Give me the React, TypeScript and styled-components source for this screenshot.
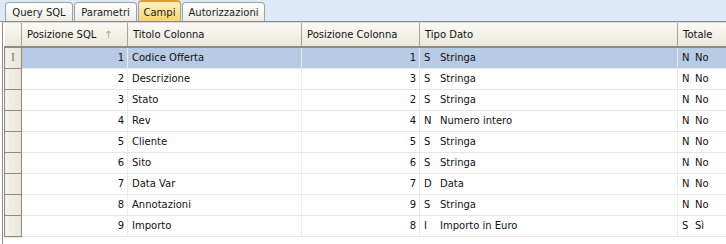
import styled, { createGlobalStyle, css } from "styled-components";

const GlobalStyle = createGlobalStyle`
  html, body {
    margin: 0;
    padding: 0;
    background: #ffffff;
  }
  body {
    font-family: "DejaVu Sans", Verdana, sans-serif;
    font-size: 10px;
  }
`;

const Frame = styled.div`
  width: 726px;
  height: 244px;
  overflow: hidden;
  display: flex;
  flex-direction: column;
  background: #ffffff;
`;

const TabStrip = styled.div`
  height: 21px;
  flex: none;
  display: flex;
  align-items: flex-end;
  gap: 1px;
  padding-left: 5px;
  background: #dde9f7;
  border-bottom: 1px solid #8c8c8c;
`;

const Tab = styled.div<{ $active?: boolean; $w: number }>`
  width: ${({ $w }) => $w}px;
  height: 19px;
  box-sizing: border-box;
  padding-top: 1px;
  display: flex;
  align-items: center;
  justify-content: center;
  white-space: nowrap;
  border: 1px solid #9aa4a6;
  border-bottom: none;
  border-radius: 4px 4px 0 0;
  color: #1a1a1a;
  background: linear-gradient(#ffffff, #eeede5);
  ${({ $active }) =>
    $active &&
    css`
      height: 21px;
      border-color: #e39b36 #9aa4a6 #9aa4a6 #9aa4a6;
      border-top-width: 2px;
      background: linear-gradient(#fff2c4, #fad36a);
    `}
`;

const GridBox = styled.div`
  flex: 1;
  margin-left: 2px;
  border-left: 1px solid #8c8c8c;
  border-top: 1px solid #d8d8d8;
  padding-left: 1px;
`;

const Table = styled.table`
  border-collapse: collapse;
  table-layout: fixed;
  width: 723px;
  color: #111111;
`;

const Col = styled.col<{ $w: number }>`
  width: ${({ $w }) => $w}px;
`;

const HeadCell = styled.th`
  box-sizing: border-box;
  height: 24px;
  padding: 0 0 0 5px;
  text-align: left;
  font-weight: normal;
  white-space: nowrap;
  overflow: hidden;
  background: linear-gradient(#faf9f5, #ebe9dd);
  border-right: 1px solid #a7a599;
  border-bottom: 2px solid #8f8d83;
  position: relative;
`;

const SortArrow = styled.span`
  position: absolute;
  left: 82px;
  top: 6px;
  color: #a4a49c;
  font-size: 10px;
`;

const Row = styled.tr<{ $selected?: boolean }>`
  height: 21px;
  background: ${({ $selected }) => ($selected ? "#b8cbe4" : "#ffffff")};
`;

const Selector = styled.td`
  box-sizing: border-box;
  padding: 0;
  background: linear-gradient(90deg, #f4f2ea, #e9e5d8);
  border: 1px solid #8e8b80;
  border-top: none;
  text-align: center;
  color: #7a7a74;
  font-family: "Liberation Serif", serif;
  font-size: 12px;
`;

const Cell = styled.td<{ $num?: boolean }>`
  box-sizing: border-box;
  padding: ${({ $num }) => ($num ? "0 3px 0 4px" : "0 4px")};
  white-space: nowrap;
  overflow: hidden;
  text-align: ${({ $num }) => ($num ? "right" : "left")};
  border-right: 1px solid #ebebeb;
  border-bottom: 1px solid #e4e4e4;
`;

const Code = styled.span<{ $w: number }>`
  display: inline-block;
  width: ${({ $w }) => $w}px;
`;

const TailCell = styled.td`
  padding: 0;
  border-bottom: 1px solid #e4e4e4;
`;

const tabs = [
  { label: "Query SQL", w: 68 },
  { label: "Parametri", w: 63 },
  { label: "Campi", w: 43 },
  { label: "Autorizzazioni", w: 83 },
];

const rows = [
  { sql: 1, title: "Codice Offerta", pos: 1, code: "S", type: "Stringa", t: "N", tl: "No" },
  { sql: 2, title: "Descrizione", pos: 3, code: "S", type: "Stringa", t: "N", tl: "No" },
  { sql: 3, title: "Stato", pos: 2, code: "S", type: "Stringa", t: "N", tl: "No" },
  { sql: 4, title: "Rev", pos: 4, code: "N", type: "Numero intero", t: "N", tl: "No" },
  { sql: 5, title: "Cliente", pos: 5, code: "S", type: "Stringa", t: "N", tl: "No" },
  { sql: 6, title: "Sito", pos: 6, code: "S", type: "Stringa", t: "N", tl: "No" },
  { sql: 7, title: "Data Var", pos: 7, code: "D", type: "Data", t: "N", tl: "No" },
  { sql: 8, title: "Annotazioni", pos: 9, code: "S", type: "Stringa", t: "N", tl: "No" },
  { sql: 9, title: "Importo", pos: 8, code: "I", type: "Importo in Euro", t: "S", tl: "Sì" },
];

const App = () => {
  return (
    <Frame>
      <GlobalStyle />
      <TabStrip>
        {tabs.map((t) => (
          <Tab key={t.label} $w={t.w} $active={t.label === "Campi"}>
            {t.label}
          </Tab>
        ))}
      </TabStrip>
      <GridBox>
        <Table>
          <colgroup>
            <Col $w={17} />
            <Col $w={106} />
            <Col $w={174} />
            <Col $w={118} />
            <Col $w={258} />
            <Col $w={50} />
          </colgroup>
          <thead>
            <tr>
              <HeadCell />
              <HeadCell>
                Posizione SQL
                <SortArrow>↑</SortArrow>
              </HeadCell>
              <HeadCell>Titolo Colonna</HeadCell>
              <HeadCell>Posizione Colonna</HeadCell>
              <HeadCell>Tipo Dato</HeadCell>
              <HeadCell>Totale</HeadCell>
            </tr>
          </thead>
          <tbody>
            {rows.map((r, i) => (
              <Row key={r.sql} $selected={i === 0}>
                <Selector>{i === 0 ? "I" : ""}</Selector>
                <Cell $num>{r.sql}</Cell>
                <Cell>{r.title}</Cell>
                <Cell $num>{r.pos}</Cell>
                <Cell>
                  <Code $w={16}>{r.code}</Code>
                  {r.type}
                </Cell>
                <Cell>
                  <Code $w={13}>{r.t}</Code>
                  {r.tl}
                </Cell>
              </Row>
            ))}
            <tr>
              <TailCell />
            </tr>
          </tbody>
        </Table>
      </GridBox>
    </Frame>
  );
};

export default App;
